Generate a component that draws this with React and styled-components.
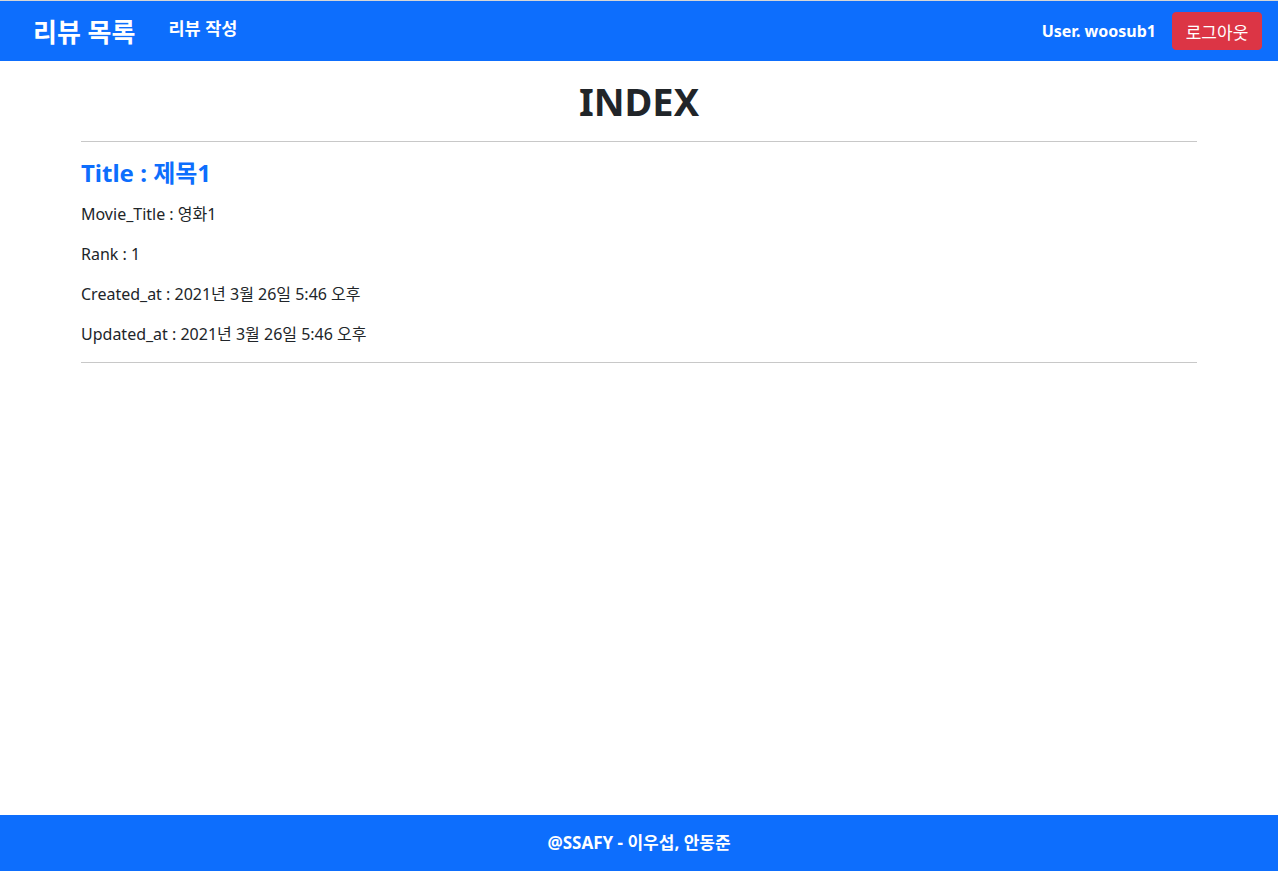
import React from "react";
import styled, { createGlobalStyle } from "styled-components";

const GlobalStyle = createGlobalStyle`
  body {
    margin: 0;
    font-family: "Noto Sans", "Noto Sans CJK KR", sans-serif;
    color: #212529;
    background: #fff;
  }
  * { box-sizing: border-box; }
`;

const review = {
  title: "제목1",
  movieTitle: "영화1",
  rank: 1,
  createdAt: "2021년 3월 26일 5:46 오후",
  updatedAt: "2021년 3월 26일 5:46 오후",
};

export default function App() {
  return (
    <>
      <GlobalStyle />
      <Page>
        <Navbar>
          <NavLeft>
            <Brand>리뷰 목록</Brand>
            <NavLink>리뷰 작성</NavLink>
          </NavLeft>
          <NavRight>
            <UserName>User. woosub1</UserName>
            <LogoutButton type="button">로그아웃</LogoutButton>
          </NavRight>
        </Navbar>
        <Main>
          <PageTitle>INDEX</PageTitle>
          <Divider />
          <Review>
            <ReviewTitle>Title : {review.title}</ReviewTitle>
            <Field>Movie_Title : {review.movieTitle}</Field>
            <Field>Rank : {review.rank}</Field>
            <Field>Created_at : {review.createdAt}</Field>
            <Field>Updated_at : {review.updatedAt}</Field>
          </Review>
          <Divider />
        </Main>
        <Footer>@SSAFY - 이우섭, 안동준</Footer>
      </Page>
    </>
  );
}

const Page = styled.div`
  min-height: 100vh;
  display: flex;
  flex-direction: column;
  border-top: 1px solid #d6d6d6;
`;

const Navbar = styled.nav`
  height: 60px;
  background: #0d6efd;
  display: flex;
  align-items: center;
  justify-content: space-between;
  padding: 0 16px 0 33px;
`;

const NavLeft = styled.div`
  display: flex;
  align-items: center;
  gap: 33px;
`;

const Brand = styled.a`
  color: #fff;
  font-size: 26px;
  font-weight: 700;
  margin-top: -1px;
`;

const NavLink = styled.a`
  color: #fff;
  font-size: 17.5px;
  font-weight: 700;
  margin-top: -7px;
`;

const NavRight = styled.div`
  display: flex;
  align-items: center;
  gap: 16px;
`;

const UserName = styled.span`
  color: #fff;
  font-size: 16px;
  font-weight: 700;
`;

const LogoutButton = styled.button`
  background: #dc3545;
  border: 1px solid #dc3545;
  color: #fff;
  border-radius: 4px;
  height: 38px;
  width: 90px;
  font-family: inherit;
  font-size: 17px;
  padding: 0;
  cursor: pointer;
`;

const Main = styled.main`
  flex: 1;
  width: 1116px;
  margin: 0 auto;
`;

const PageTitle = styled.h1`
  margin: 18px 0 0;
  text-align: center;
  font-size: 38px;
  font-weight: 700;
  line-height: 1.2;
`;

const Divider = styled.hr`
  margin: 16px 0 17px;
  border: 0;
  border-top: 1px solid #c8c8c8;
`;

const Review = styled.div`
  display: flex;
  flex-direction: column;
`;

const ReviewTitle = styled.h3`
  margin: 0 0 15px;
  color: #0d6efd;
  font-size: 24px;
  font-weight: 700;
  line-height: 1.2;
`;

const Field = styled.p`
  margin: 0 0 16px;
  font-size: 16px;
  line-height: 24px;

  &:last-child {
    margin-bottom: 0;
  }
`;

const Footer = styled.footer`
  height: 56px;
  padding-bottom: 4px;
  background: #0d6efd;
  color: #fff;
  font-size: 17px;
  font-weight: 700;
  display: flex;
  align-items: center;
  justify-content: center;
`;
